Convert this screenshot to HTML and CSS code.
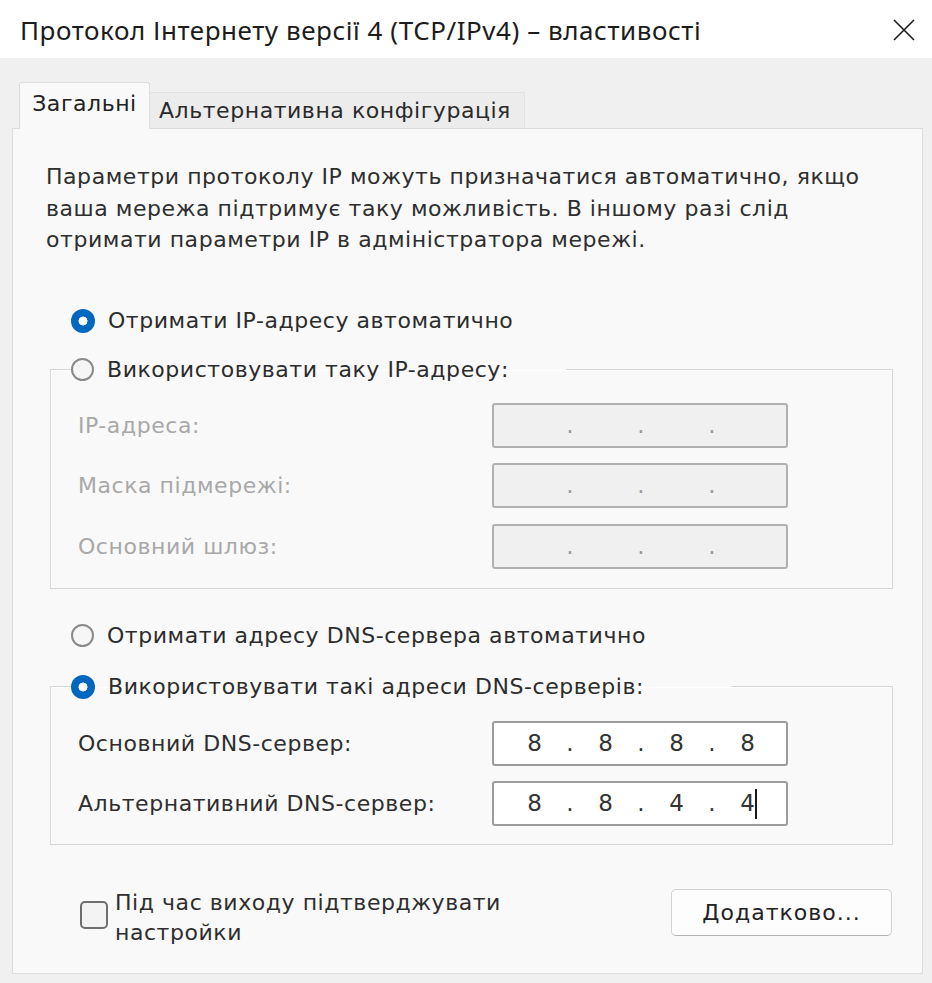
FILE: index.html
```html
<!DOCTYPE html>
<html lang="uk">
<head>
<meta charset="utf-8">
<title>Протокол Інтернету версії 4 (TCP/IPv4) – властивості</title>
<link rel="stylesheet" href="styles.css">
</head>
<body>
<div class="window">
  <div class="titlebar">
    <span class="title">Протокол Інтернету версії 4 (TCP/IPv4) – властивості</span>
    <svg class="close" width="24" height="24" viewBox="0 0 24 24"><path d="M2 2 L22 22 M22 2 L2 22" stroke="#1c1c1c" stroke-width="1.6" fill="none"/></svg>
  </div>
  <div class="tabs">
    <div class="tab tab-active">Загальні</div>
    <div class="tab tab-other">Альтернативна конфігурація</div>
  </div>
  <div class="panel">
    <p class="intro">Параметри протоколу IP можуть призначатися автоматично, якщо<br>ваша мережа підтримує таку можливість. В іншому разі слід<br>отримати параметри IP в адміністратора мережі.</p>

    <div class="radio-row first-radio">
      <span class="radio radio-on"></span><span>Отримати IP-адресу автоматично</span>
    </div>
    <fieldset class="group group-ip">
      <legend><span class="radio-row"><span class="radio"></span><span>Використовувати таку IP-адресу:</span></span></legend>
      <div class="rows">
        <div class="field-row disabled"><span class="label">IP-адреса:</span><div class="ipbox off"><span></span><span class="dot">.</span><span></span><span class="dot">.</span><span></span><span class="dot">.</span><span></span></div></div>
        <div class="field-row disabled"><span class="label">Маска підмережі:</span><div class="ipbox off"><span></span><span class="dot">.</span><span></span><span class="dot">.</span><span></span><span class="dot">.</span><span></span></div></div>
        <div class="field-row disabled"><span class="label">Основний шлюз:</span><div class="ipbox off"><span></span><span class="dot">.</span><span></span><span class="dot">.</span><span></span><span class="dot">.</span><span></span></div></div>
      </div>
    </fieldset>

    <div class="radio-row dns-auto">
      <span class="radio"></span><span>Отримати адресу DNS-сервера автоматично</span>
    </div>
    <fieldset class="group group-dns">
      <legend><span class="radio-row"><span class="radio radio-on"></span><span>Використовувати такі адреси DNS-серверів:</span></span></legend>
      <div class="rows">
        <div class="field-row"><span class="label">Основний DNS-сервер:</span><div class="ipbox"><span>8</span><span class="dot">.</span><span>8</span><span class="dot">.</span><span>8</span><span class="dot">.</span><span>8</span></div></div>
        <div class="field-row"><span class="label">Альтернативний DNS-сервер:</span><div class="ipbox"><span>8</span><span class="dot">.</span><span>8</span><span class="dot">.</span><span>4</span><span class="dot">.</span><span class="octet-caret">4<span class="caret"></span></span></div></div>
      </div>
    </fieldset>

    <div class="bottom-row">
      <span class="checkbox"></span>
      <span class="check-label">Під час виходу підтверджувати<br>настройки</span>
      <button class="btn" type="button">Додатково...</button>
    </div>
  </div>
</div>
</body>
</html>
```

FILE: styles.css
```css
html, body {
  margin: 0;
  padding: 0;
}
body {
  background: #f0f0f0;
  font-family: "DejaVu Sans", "Liberation Sans", sans-serif;
  font-size: 22px;
  letter-spacing: 0.55px;
  color: #2c2c2c;
}
.window {
  width: 932px;
  height: 983px;
  background: #f0f0f0;
  overflow: hidden;
}
.titlebar {
  height: 58px;
  background: #ffffff;
  display: flex;
  align-items: center;
  padding: 0 16px 0 20px;
  justify-content: space-between;
}
.title {
  font-family: "Noto Sans", "Liberation Sans", sans-serif;
  font-size: 26px;
  letter-spacing: 0.55px;
  color: #1c1c1c;
  padding-top: 2px;
}
.close {
  display: block;
  margin-top: 2px;
}
.tabs {
  display: flex;
  align-items: flex-end;
  height: 46px;
  margin-top: 24px;
  padding-left: 19px;
  position: relative;
  z-index: 1;
}
.tab {
  box-sizing: border-box;
  display: flex;
  align-items: center;
  white-space: nowrap;
}
.tab-active {
  width: 131px;
  height: 47px;
  margin-bottom: -1px;
  background: #f9f9f9;
  border: 1px solid #dcdcdc;
  border-bottom: none;
  border-radius: 3px 3px 0 0;
  justify-content: center;
  padding-bottom: 6px;
  color: #222;
}
.tab-other {
  width: 375px;
  height: 36px;
  background: #ececec;
  border: 1px solid #e2e2e2;
  border-bottom: none;
  border-left: none;
  padding-left: 9px;
  color: #2a2a2a;
}
.panel {
  margin-left: 12px;
  width: 911px;
  height: 846px;
  box-sizing: border-box;
  border: 1px solid #dcdcdc;
  background: #f9f9f9;
  padding: 32px 0 0 33px;
}
.intro {
  margin: 0;
  line-height: 31.5px;
  white-space: nowrap;
  color: #2e2e2e;
}
.radio-row {
  display: flex;
  align-items: center;
  height: 34px;
  gap: 13px;
  white-space: nowrap;
}
.first-radio {
  margin: 48px 0 0 25px;
}
.radio {
  box-sizing: border-box;
  width: 23px;
  height: 23px;
  border-radius: 50%;
  border: 2px solid #8a8a8a;
  background: #f6f6f6;
  flex: none;
}
.radio-on {
  width: 24px;
  height: 24px;
  border: none;
  background: radial-gradient(circle, #ffffff 0 4.2px, #0067c0 4.8px);
}
.group {
  box-sizing: border-box;
  width: 843px;
  margin: 15px 0 0 4px;
  padding: 0;
  border: 1px solid #d6d6d6;
  box-shadow: inset 1px 1px 0 #ffffff;
  min-width: 0;
}
.group legend {
  box-sizing: border-box;
  padding: 0;
  margin-left: 20px;
}
.group-ip legend {
  width: 495px;
}
.group-dns legend {
  width: 660px;
}
.rows {
  display: flex;
  flex-direction: column;
  gap: 15.5px;
}
.group-ip {
  padding-bottom: 19px;
}
.group-ip .rows {
  margin-top: 16px;
}
.dns-auto {
  margin: 30px 0 0 25px;
}
.group-dns {
  margin-top: 17px;
  padding-bottom: 18px;
}
.group-dns .rows {
  margin-top: 17px;
}
.field-row {
  display: flex;
  align-items: center;
  height: 45px;
  padding-left: 27px;
}
.label {
  width: 414px;
  flex: none;
  white-space: nowrap;
  color: #2e2e2e;
}
.disabled .label {
  color: #a8a8a8;
}
.ipbox {
  box-sizing: border-box;
  width: 296px;
  height: 45px;
  border: 2px solid #9c9c9c;
  border-radius: 3px;
  background: #ffffff;
  display: grid;
  grid-template-columns: 49px 22px 49px 22px 49px 22px 49px;
  align-items: center;
  padding-left: 16px;
  color: #333;
  letter-spacing: 0;
  font-size: 23px;
}
.ipbox > span {
  text-align: center;
  line-height: 41px;
}
.ipbox.off {
  background: #f0f0f0;
  border-color: #b0b0b0;
}
.ipbox.off .dot {
  color: #9a9a9a;
}
.octet-caret {
  position: relative;
}
.caret {
  position: absolute;
  left: 32px;
  top: 6px;
  width: 2px;
  height: 30px;
  background: #1a1a1a;
}
.bottom-row {
  display: flex;
  align-items: flex-start;
  margin-top: 43px;
}
.checkbox {
  box-sizing: border-box;
  width: 28px;
  height: 28px;
  border: 2px solid #6e6e6e;
  border-radius: 5px;
  background: #f3f3f3;
  margin: 13px 0 0 34px;
  flex: none;
}
.check-label {
  margin-left: 7px;
  line-height: 30px;
  white-space: nowrap;
  color: #2e2e2e;
}
.btn {
  margin: 1px 30px 0 auto;
  width: 221px;
  height: 47px;
  box-sizing: border-box;
  border: 1px solid #d2d2d2;
  border-bottom-color: #b4b4b4;
  border-radius: 5px;
  background: #fdfdfd;
  font-family: "DejaVu Sans", "Liberation Sans", sans-serif;
  font-size: 22px;
  letter-spacing: 1px;
  color: #222;
  padding: 0;
}
```
